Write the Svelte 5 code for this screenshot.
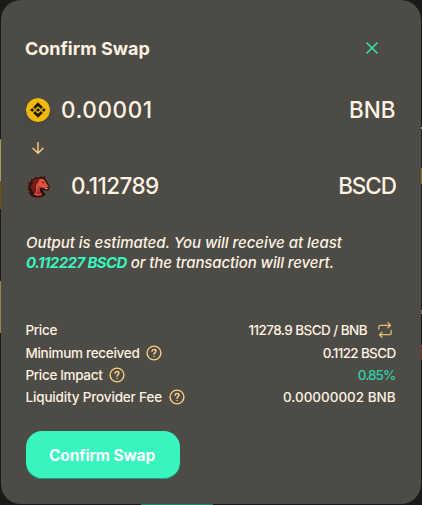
<script>
  const details = [
    { label: 'Minimum received', value: '0.1122 BSCD', ls: -0.3, vs: -0.66 },
    { label: 'Price Impact', value: '0.85%', ls: -0.34, vs: -0.92, good: true },
    { label: 'Liquidity Provider Fee', value: '0.00000002 BNB', ls: -0.16, vs: -0.03 }
  ];
</script>

<main>
  <section class="card">
    <header>
      <h1>Confirm Swap</h1>
      <button class="close" aria-label="Close">
        <svg width="12" height="12" viewBox="0 0 12 12"><path d="M1 1l10 10M11 1L1 11" /></svg>
      </button>
    </header>

    <div class="token">
      <svg class="bnb" width="24" height="24" viewBox="0 0 32 32">
        <circle cx="16" cy="16" r="16" fill="#f0b90b" />
        <path fill="#1b1505" stroke="#1b1505" stroke-width=".5" d="M12.116 14.404L16 10.52l3.886 3.886 2.26-2.26L16 6l-6.144 6.144 2.26 2.26zM6 16l2.26-2.26L10.52 16l-2.26 2.26L6 16zm6.116 1.596L16 21.48l3.886-3.886 2.26 2.259L16 26l-6.144-6.144-.003-.003 2.263-2.257zM21.48 16l2.26-2.26L26 16l-2.26 2.26L21.48 16zm-3.188-.002h.002V16L16 18.294l-2.291-2.29-.004-.004.004-.003.401-.402.195-.195L16 13.706l2.293 2.293z" />
      </svg>
      <span class="amount from">0.00001</span>
      <span class="symbol">BNB</span>
    </div>

    <div class="arrow">
      <svg width="12" height="12" viewBox="0 0 12 12"><path d="M6 .5v10.600M1 6.200l5 5 5-5" /></svg>
    </div>

    <div class="token">
      <svg class="horse" width="24" height="24" viewBox="0 0 24 24">
        <path fill="#32110d" d="M19.400.8l-.2 3.400 1.600 3 3 5.300-.6 3-2.400 1.300-3.800-1.200c.2 2.200 1 3.700 3 4.800-2.800 2.700-8.500 4-12.500 2.500-3.500-1.300-5-3.700-4.400-6.700l-1.800-1.300 1.700-1.400-1.900-1.300 2.200-1.200L2 8.600l2.700-.4L5.300 4.800l3 .5.900-2.600 3 1.100L15.400 2.300l2 1.100z" />
        <path fill="#df513f" d="M9.500 6.800c2.600-1.900 6.300-2.800 8.800-1.300l1.500 3 2.800 4.300-.4 1.800-1.800.6-3.200-1.500-3.400-.1c-.4 2.700.4 5.300 2.500 7.200-3 1.700-6.800 1.300-8.700-.7 2.200-2.200 3-4.500 2.300-7.300z" />
        <path fill="#782017" d="M13.800 4.500c-3.800-.4-7 .7-8.300 4.100L8 8c-2.500 1.700-3.700 4-3.200 7l1.800-1.800c-.6 2.200-.4 4 .7 5.600 2-2.200 2.800-4.300 2.300-7.100l2.400-3z" />
        <path fill="#a83227" d="M12.600 12.200c-.1 3-1.300 5.500-3.500 7.400 1.900.8 4 .9 6 .3-1.700-1.600-2.200-3.500-1.500-5.900l2.400-.8z" />
        <path fill="#2a0d0a" d="M15.600 7.800l2.900.4-1.300 1zM19.600 12.900l2.800.2-.8.8z" />
        <path fill="#fff2e2" d="M19.300 14l2.400.6-1.600.4z" />
      </svg>
      <span class="amount to">0.112789</span>
      <span class="symbol wide">BSCD</span>
    </div>

    <p>
      <span class="first">Output is estimated. You will receive at least</span><br />
      <b>0.112227 BSCD</b><span class="rest">or the transaction will revert.</span>
    </p>

    <div class="details">
      <div class="row price">
        <span class="label">Price</span>
        <span class="rate">11278.9 BSCD / BNB</span>
        <svg class="swap" width="14" height="16" viewBox="0 0 14 16">
          <path d="M.8 7V5.300Q.8 3.300 2.800 3.300H12.200M10 .8l2.500 2.500L10 5.800M13.200 8.500v2.200q0 2-2 2H1.800M4 10.200l-2.500 2.500L4 15.200" />
        </svg>
      </div>
      {#each details as item}
        <div class="row">
          <span class="label" style:letter-spacing="{item.ls}px">{item.label}</span>
          <svg class="help" width="16" height="16" viewBox="0 0 16 16">
            <circle cx="8" cy="8" r="6.900" />
            <path d="M6 6.400C6.100 5.100 7 4.500 8 4.500c1.200 0 2 .7 2 1.700C10 7.500 8.100 7.700 8 9.200M8 11.500v.1" />
          </svg>
          <span class="value" class:good={item.good} style:letter-spacing="{item.vs}px">{item.value}</span>
        </div>
      {/each}
    </div>

    <button class="confirm">Confirm Swap</button>
  </section>
</main>

<style>
  :global(body) { background: #1b1a19; }
  main {
    box-sizing: border-box;
    width: 422px;
    height: 505px;
    padding: 0 1px 1px;
    overflow: hidden;
    background:
      linear-gradient(#1b1a19 139px, #77736a 139px 140px, #a39b70 140px 181px, #765200 181px 209px, #1a1a18 209px 281px, #9d8547 281px 333px, #1b1a19 333px) left / 1px 100% no-repeat,
      linear-gradient(#1b1a19 127px, #a5a5a0 127px 129px, #222120 129px 168px, #96771b 168px 184px, #222120 184px 310px, #77736a 310px 314px, #1b1a19 314px 345px, #7c2a1a 345px 360px, #1b1a19 360px) right / 1px 100% no-repeat,
      linear-gradient(90deg, #1b1a19 141px, #208269 141px 213px, #1b1a19 213px) bottom / 100% 1px no-repeat,
      #1b1a19;
    color: #fff2e2;
    font-family: Inter, "Noto Sans", sans-serif;
  }
  .card {
    box-sizing: border-box;
    display: flex;
    flex-direction: column;
    width: 420px;
    height: 504px;
    padding: 0 25.500px 0 25px;
    border-radius: 20px;
    background: #4c4b45;
  }
  header { display: flex; align-items: center; justify-content: space-between; height: 96px; padding-right: 17.500px; }
  h1 { margin: 2px 0 0 -1px; font-size: 18px; line-height: 24px; font-weight: 700; }
  button { padding: 0; border: 0; font-family: inherit; }
  .close { display: flex; background: none; }
  svg { flex: none; fill: none; stroke-linecap: round; stroke-linejoin: round; }
  .close path { stroke: #36e8b4; stroke-width: 1.500; }
  .token { display: flex; align-items: center; height: 28px; }
  .bnb { border-radius: 50%; box-shadow: 0 6px 10px rgb(0 0 0 / 7%); }
  .amount, .symbol { font-size: 22.500px; line-height: 28px; font-weight: 550; }
  .from { margin-left: 11px; font-weight: 450; letter-spacing: .6px; }
  .to { margin-left: 21px; letter-spacing: -.56px; }
  .symbol { margin-left: auto; }
  .wide { letter-spacing: -1.050px; margin-right: -.5px; }
  .arrow { display: flex; width: 24px; height: 48px; align-items: center; justify-content: center; }
  .arrow path { stroke: #ffcf87; stroke-width: 1.400; }
  p { margin: 33px 0 0; font-size: 15px; line-height: 20px; font-weight: 500; font-style: italic; white-space: nowrap; }
  .first { letter-spacing: -.035px; }
  b { margin-right: 4px; color: #38f5bf; font-weight: 700; letter-spacing: -.6px; }
  .rest { letter-spacing: -.1px; }
  .details { margin-top: 45px; font-size: 13.500px; font-weight: 530; }
  .row { display: flex; align-items: center; height: 22px; }
  .label { margin-left: -.5px; }
  .price { height: 24px; padding-bottom: 0; }
  .price .label { letter-spacing: -.34px; }
  .rate { margin-left: auto; letter-spacing: -.56px; }
  .swap { margin: 0 3.500px 0 11px; }
  .swap path { stroke: #e5bb71; stroke-width: 1.300; }
  .help { margin-left: 7px; }
  .help circle, .help path { stroke: #ffcf87; stroke-width: 1.400; }
  .value { margin-left: auto; }
  .good { color: #31d0aa; font-weight: 450; }
  .confirm {
    width: 154px;
    height: 48px;
    margin-top: 23px;
    padding-right: 2px;
    border-radius: 16px;
    background: #38f5bf;
    box-shadow: inset 0 -1px 0 rgb(14 14 44 / 40%);
    color: #fff;
    font-size: 15.500px;
    font-weight: 700;
    letter-spacing: -.1px;
  }
</style>
